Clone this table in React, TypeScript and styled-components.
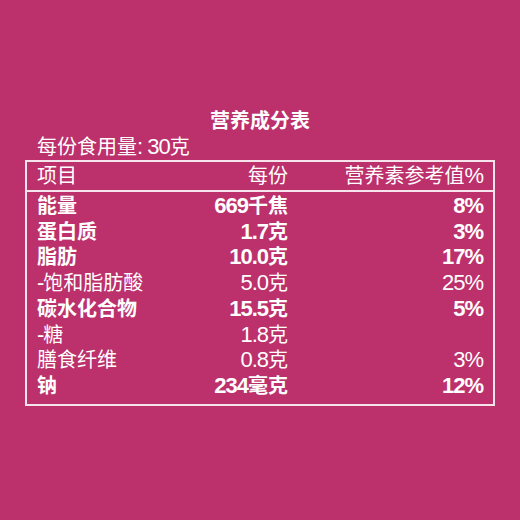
import React from 'react';
import styled, {createGlobalStyle} from 'styled-components';

const Global = createGlobalStyle`
  html, body {
    margin: 0;
    padding: 0;
    background: #bc306c;
  }
`;

const Page = styled.div`
  width: 520px;
  height: 520px;
  background: #bc306c;
  color: #fff;
  font-family: "Liberation Sans", "Noto Sans CJK SC", sans-serif;
  padding-top: 107px;
  box-sizing: border-box;
`;

const Title = styled.div`
  text-align: center;
  font-family: "Noto Sans CJK SC", sans-serif;
  font-weight: bold;
  font-size: 20px;
  line-height: 26px;
`;

const Serving = styled.div`
  margin-left: 37px;
  margin-top: 1px;
  font-size: 20px;
  line-height: 26px;
`;

// latin digits in the label are a tall condensed face
const Num = styled.span`
  font-size: 22px;
  line-height: 1;
  letter-spacing: -1px;
`;

const Table = styled.div`
  margin: 0 25px;
  border: 2px solid #f6e4ec;
`;

const Row = styled.div<{ $bold?: boolean; $head?: boolean }>`
  display: grid;
  grid-template-columns: 1fr 100px 195px;
  padding: 0 10px 0 10px;
  font-size: 20px;
  line-height: ${p => (p.$head ? '28px' : '25.7px')};
  font-weight: ${p => (p.$bold ? 'bold' : 'normal')};
  > span:nth-child(2), > span:nth-child(3) {
    text-align: right;
  }
`;

const Head = styled.div`
  border-bottom: 2px solid #f6e4ec;
`;

const Body = styled.div`
  padding: 2px 0 4px;
`;

const rows: [string, string, string, boolean][] = [
  ['能量', '669千焦', '8%', true],
  ['蛋白质', '1.7克', '3%', true],
  ['脂肪', '10.0克', '17%', true],
  ['-饱和脂肪酸', '5.0克', '25%', false],
  ['碳水化合物', '15.5克', '5%', true],
  ['-糖', '1.8克', '', false],
  ['膳食纤维', '0.8克', '3%', false],
  ['钠', '234毫克', '12%', true],
];

const Txt = ({s}: {s: string}) => (
  <>
    {s.split(/([0-9.%:\- ]+)/).map((part, i) =>
      /[0-9.%:\- ]/.test(part) ? <Num key={i}>{part}</Num> : part
    )}
  </>
);

const App: React.FC = () => {
  return (
    <Page>
      <Global />
      <Title>营养成分表</Title>
      <Serving><Txt s="每份食用量: 30克" /></Serving>
      <Table>
        <Head>
          <Row $head>
            <span>项目</span>
            <span>每份</span>
            <span><Txt s="营养素参考值%" /></span>
          </Row>
        </Head>
        <Body>
          {rows.map(([name, val, pct, bold]) => (
            <Row key={name} $bold={bold}>
              <span><Txt s={name} /></span>
              <span><Txt s={val} /></span>
              <span><Txt s={pct} /></span>
            </Row>
          ))}
        </Body>
      </Table>
    </Page>
  );
};

export default App;
